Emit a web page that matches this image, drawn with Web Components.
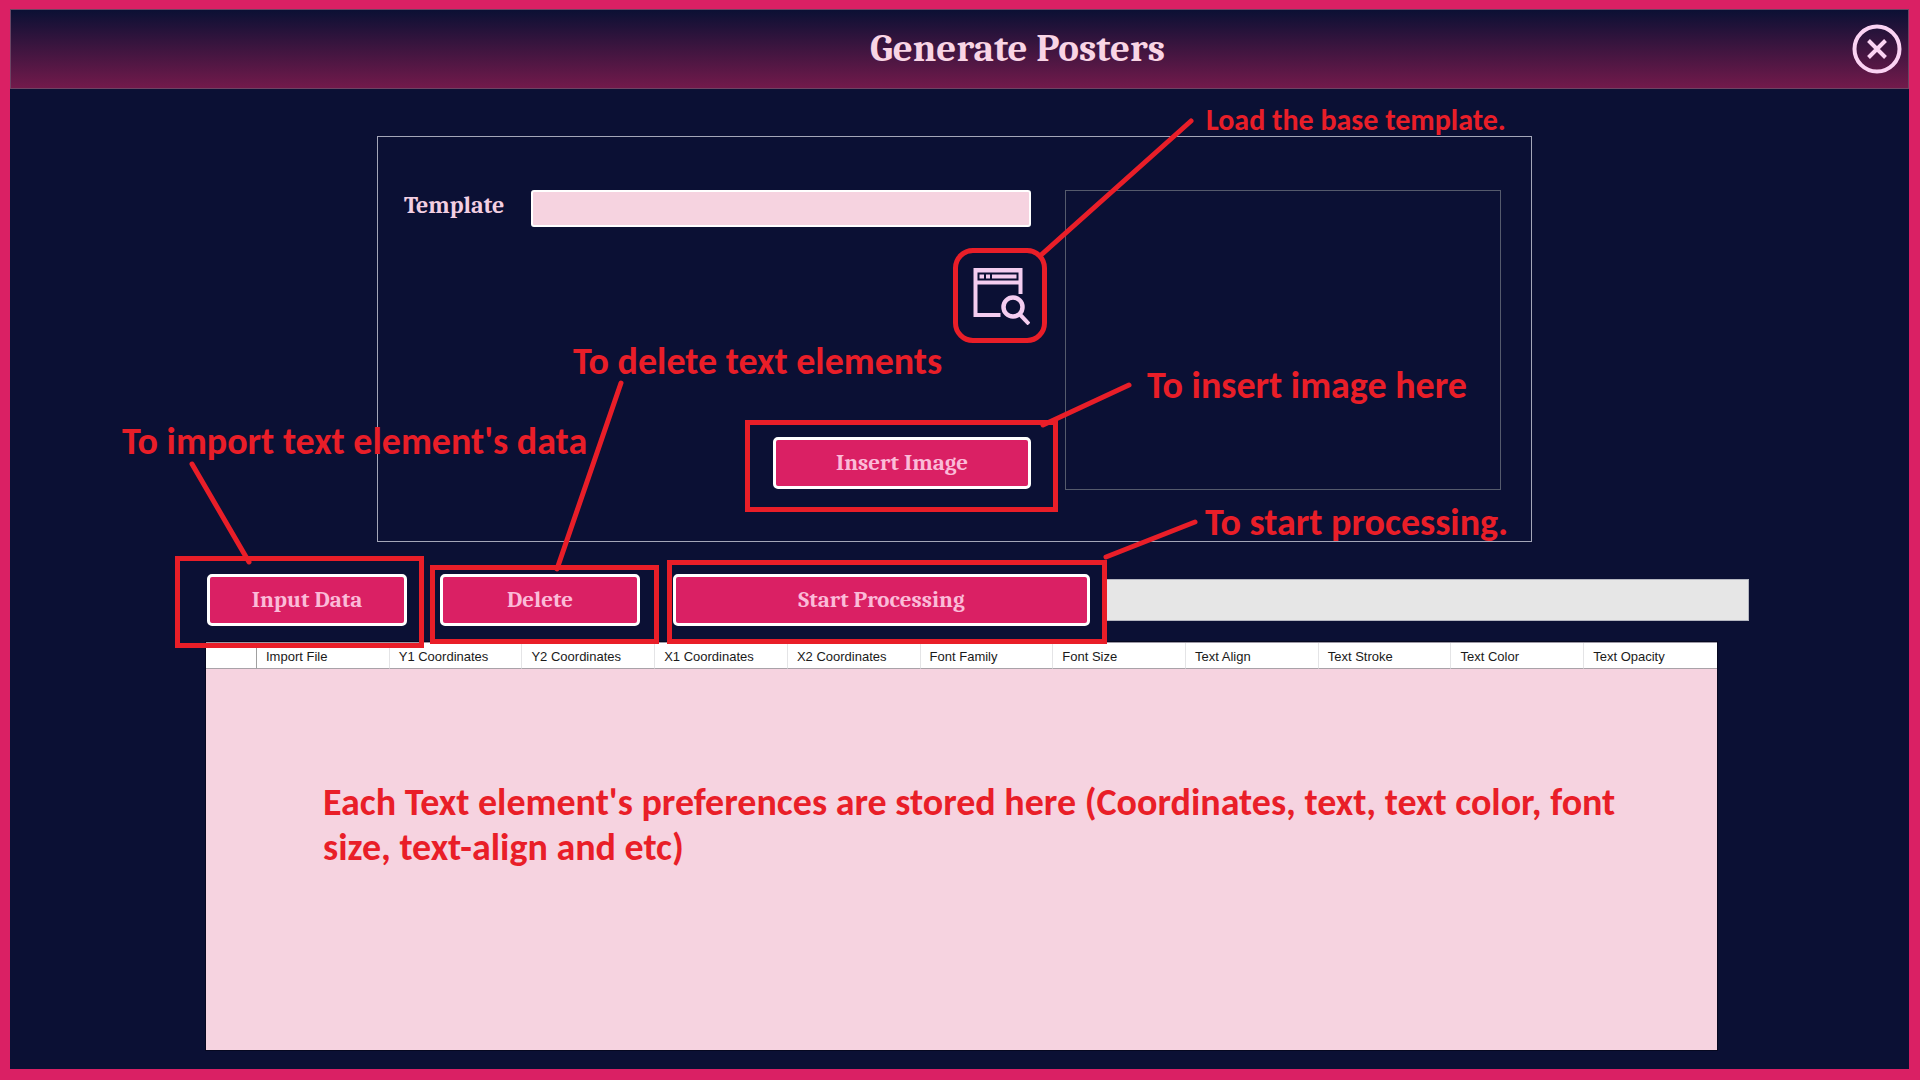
<!DOCTYPE html>
<html lang="en">
<head>
<meta charset="utf-8">
<title>Generate Posters</title>
<style>
  html, body { margin: 0; }
  body {
    --navy: #0b1034; --rose: #da2064; --blush: #f6d3e0; --mark: #e91e28;
    --serif: Cambria, Caladea, "Liberation Serif", serif;
    --note: Calibri, Carlito, Lato, sans-serif;
    background: var(--navy);
    font-family: var(--serif);
  }
</style>
</head>
<body>
<poster-window></poster-window>

<script>
const define = (name, html, setup) => {
  const template = document.createElement('template');
  template.innerHTML = html;
  customElements.define(name, class extends HTMLElement {
    constructor() {
      super();
      this.attachShadow({ mode: 'open' }).append(template.content.cloneNode(true));
    }
    connectedCallback() { if (setup) setup(this, this.shadowRoot); }
  });
};

/* Bordered action button */
define('action-button', `
  <style>
    :host { display: block; }
    button {
      display: block; box-sizing: border-box; width: 100%; height: 52px; padding: 0;
      border: 3px solid #fff; border-radius: 5px;
      background: var(--rose); color: #fbbbd8;
      font: bold 23px/32px var(--serif);
    }
  </style>
  <button type="button"><slot></slot></button>`);

/* Outline round a control, with a leader line and a note.
   ring = top right bottom left distance outside the control;
   line = x1 y1 x2 y2 and at = x y, both from the control's top left corner. */
define('call-out', `
  <style>
    :host { display: block; position: relative; }
    .ring { position: absolute; z-index: 2; border: 5px solid var(--mark); pointer-events: none; }
    svg { position: absolute; z-index: 3; left: 0; top: 0; width: 1px; height: 1px; overflow: visible; pointer-events: none; }
    line { stroke: var(--mark); stroke-width: 5; stroke-linecap: round; }
    .note {
      position: absolute; z-index: 3; white-space: nowrap; pointer-events: none;
      color: var(--mark); font: bold var(--note-size, 38px)/40px var(--note);
    }
    :host([round]) .ring { border-radius: 20px; }
  </style>
  <slot></slot>
  <div class="ring"></div>
  <svg aria-hidden="true"><line></line></svg>
  <span class="note"></span>`, (host, root) => {
  const nums = n => host.getAttribute(n).split(' ').map(Number);
  root.querySelector('.ring').style.inset = nums('ring').map(n => -n + 'px').join(' ');
  const line = root.querySelector('line');
  nums('line').forEach((n, i) => line.setAttribute(['x1', 'y1', 'x2', 'y2'][i], n));
  const note = root.querySelector('.note'), [x, y] = nums('at');
  note.style.left = x + 'px';
  note.style.top = y + 'px';
  note.textContent = host.getAttribute('note');
});

define('title-bar', `
  <style>
    :host {
      display: flex; align-items: center; box-sizing: border-box; height: 80px;
      padding: 0 6px 0 120px; border: 1px solid #6c4463;
      background: linear-gradient(#0b1034, #721a4b);
    }
    h1 { flex: 1; margin: 0; padding-left: 52px; text-align: center; color: #f9d5e5; font: bold 39px/48px var(--serif); }
    button { display: block; width: 50px; height: 50px; padding: 0; border: 0; background: none; }
    svg { display: block; }
  </style>
  <h1><slot></slot></h1>
  <button type="button" aria-label="Close">
    <svg width="50" height="50" viewBox="0 0 50 50" fill="none" stroke="#fbd3f3" stroke-width="4">
      <circle cx="25" cy="25" r="22.5"/>
      <path d="M16.500 16.500 33.500 33.500M33.500 16.500 16.500 33.500"/>
    </svg>
  </button>`);

define('browse-button', `
  <style>
    :host { display: block; }
    button { display: block; width: 58px; height: 57px; padding: 0; border: 0; background: none; }
    svg { display: block; }
  </style>
  <button type="button" aria-label="Browse template">
    <svg width="57" height="57" viewBox="0 0 57 57" fill="none" stroke="#f4cdf0" stroke-width="4">
      <path d="M27.500 47H2.500V2H47.500V26M2.500 14.500H47.500"/>
      <path d="M4 4H46V13H4Z" fill="#f4cdf0" stroke="none"/>
      <path d="M5.500 5.500H44.500V11.500H5.500Z" stroke="#0b1034" stroke-width="2"/>
      <path d="M12 5V12M18 5V12" stroke="#0b1034" stroke-width="2"/>
      <circle cx="40" cy="39" r="9.500" stroke-width="4.500"/>
      <path d="M46.500 46 56 56"/>
    </svg>
  </button>`);

define('template-panel', `
  <style>
    :host { display: flex; gap: 34px; border: 1px solid #a4a6b8; padding: 53px 30px 51px 26px; margin: 47px 377px 0 367px; }
    .form { flex: 1; display: flex; flex-direction: column; align-items: flex-end; padding-bottom: 1px; }
    .field { display: flex; align-self: stretch; gap: 28px; }
    label { color: #f3cfe2; font: bold 24px/30px var(--serif); width: 99px; }
    input { flex: 1; min-width: 0; box-sizing: border-box; height: 37px; padding: 0 6px; border: 2px solid #fff; border-radius: 3px; background: var(--blush); font: 20px/28px var(--serif); }
    .browse { margin-top: 41px; }
    .insert { margin-top: auto; width: 258px; }
    .preview { box-sizing: border-box; width: 436px; height: 300px; border: 1px solid #555a6c; }
  </style>
  <div class="form">
    <div class="field"><label for="template">Template</label><input id="template" type="text"></div>
    <call-out class="browse" round ring="20 16 18 20" line="218 -147 68 -13" at="233 -168"
      note="Load the base template." style="--note-size: 30px"><browse-button></browse-button></call-out>
    <call-out class="insert" ring="17 27 23 28" line="356 -52 270 -12" at="374 -72"
      note="To insert image here"><action-button>Insert Image</action-button></call-out>
  </div>
  <div class="preview"></div>`);

define('process-bar', `
  <style>
    :host { display: flex; align-items: center; gap: 14px; margin: 32px 160px 0 197px; }
    .actions { display: flex; gap: 33px; }
    .short { width: 200px; }
    .long { width: 417px; }
    progress { appearance: none; flex: 1; min-width: 0; height: 42px; border: 1px solid #b4b6c0; box-sizing: border-box; background: #e6e6e6; }
    progress::-webkit-progress-bar { background: #e6e6e6; }
    progress::-webkit-progress-value { background: var(--rose); }
  </style>
  <div class="actions">
    <call-out class="short" ring="18 17 22 32" line="-15 -110 42 -12" at="-85 -153"
      note="To import text element's data"><action-button>Input Data</action-button></call-out>
    <call-out class="short" ring="9 19 18 10" line="181 -191 117 -5" at="133 -233"
      note="To delete text elements"><action-button>Delete</action-button></call-out>
    <call-out class="long" ring="14 17 18 6" line="522 -52 433 -17" at="532 -72"
      note="To start processing."><action-button>Start Processing</action-button></call-out>
  </div>
  <progress value="0" max="100" aria-label="Processing progress"></progress>`);

define('element-grid', `
  <style>
    :host { display: block; position: relative; flex: 1; margin: 16px 192px 19px 196px; border-top: 1px solid #9c98a5; background: var(--blush); box-shadow: 0 0 0 1px #060820; }
    table { width: 100%; table-layout: fixed; border-collapse: separate; border-spacing: 0; background: #fff; }
    th {
      box-sizing: border-box; height: 26px; padding: 2px 0 0 9px; text-align: left; color: #1a1a1a;
      border-right: 1px solid #e4e4e6; border-bottom: 1px solid #a9a2a8;
      font: 13px/20px "Liberation Sans", Arial, sans-serif; white-space: nowrap;
    }
    th:first-child { width: 51px; border-right-color: #a0a0a0; }
    th:last-child { border-right: 0; }
    p { position: absolute; left: 117px; right: 30px; top: 137px; margin: 0; color: var(--mark); font: bold 38px/45px var(--note); }
  </style>
  <table><thead><tr>
    <th></th><th scope="col">Import File</th><th scope="col">Y1 Coordinates</th><th scope="col">Y2 Coordinates</th>
    <th scope="col">X1 Coordinates</th><th scope="col">X2 Coordinates</th><th scope="col">Font Family</th>
    <th scope="col">Font Size</th><th scope="col">Text Align</th><th scope="col">Text Stroke</th>
    <th scope="col">Text Color</th><th scope="col">Text Opacity</th>
  </tr></thead></table>
  <p><slot></slot></p>`);

define('poster-window', `
  <style>
    :host {
      display: flex; flex-direction: column; box-sizing: border-box; min-height: 100vh;
      border: solid var(--rose); border-width: 9px 11px 11px 10px; background: var(--navy);
    }
  </style>
  <title-bar>Generate Posters</title-bar>
  <template-panel></template-panel>
  <process-bar></process-bar>
  <element-grid>Each Text element's preferences are stored here (Coordinates, text, text color, font size, text-align and etc)</element-grid>`);
</script>
</body>
</html>
